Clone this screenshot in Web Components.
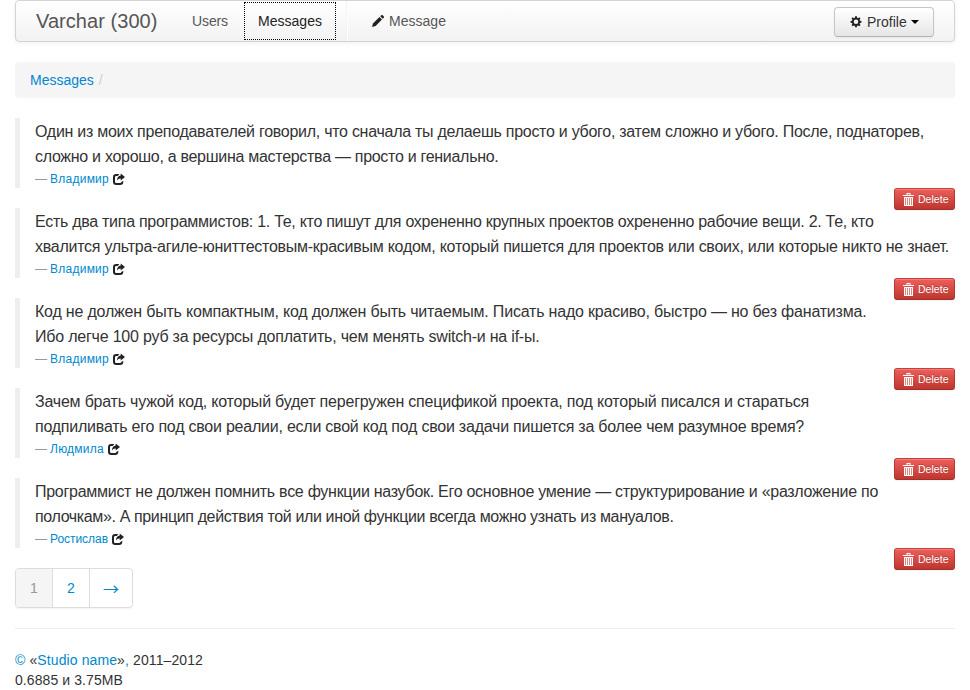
<!DOCTYPE html>
<html lang="ru">
<head>
<meta charset="utf-8">
<title>Varchar (300)</title>
<style>
body{margin:0;background:#fff;font:14px/20px "Liberation Sans",Arial,sans-serif;color:#333}
app-page{--link:#08c}
</style>
</head>
<body>
<app-page></app-page>
<script>
const define=(name,html,init)=>{
  const t=document.createElement('template');
  t.innerHTML=html;
  customElements.define(name,class extends HTMLElement{
    constructor(){super();this.attachShadow({mode:'open'}).append(t.content.cloneNode(true));}
    connectedCallback(){if(init)init(this,this.shadowRoot);}
  });
};
const icons={
  pencil:'<path d="M1 13l1-3.600 6.400-6.400 2.600 2.600L4.600 12z"/><path d="M9.200 2.200l1-1q.8-.5 1.500.1l1 1q.6.700.1 1.500l-1 1z"/>',
  cog:'<path fill-rule="evenodd" transform="translate(1.400 1.100) scale(.8)" d="M5.900.3h2.200l.3 1.800 1.200.5 1.500-1.100 1.500 1.500-1.100 1.500.5 1.200 1.800.3v2.200l-1.800.3-.5 1.200 1.100 1.500-1.500 1.500-1.500-1.100-1.200.5-.3 1.800H5.900l-.3-1.800-1.200-.5-1.500 1.100-1.500-1.500 1.100-1.500-.5-1.200-1.800-.3V6l1.800-.3.5-1.200L1.400 3l1.500-1.500 1.500 1.100 1.200-.5zM7 4.200a2.900 2.900 0 1 0 0 5.800a2.900 2.900 0 1 0 0-5.800z"/>',
  share:'<path d="M7.300 2H4.200Q1 2 1 5.200v4.600Q1 13 4.200 13h3.900q3.200 0 3.200-3.200V8.700L9.300 10.100Q9.300 11 8.100 11H4.300Q3 11 3 9.700V5.300Q3 4 4.300 4h1.500z"/><path d="M8.700 1.400L13 5 8.700 8.600V6.400Q6.200 6.200 5 8.500q.1-4.600 3.700-5z"/>',
  trash:'<path fill-rule="evenodd" d="M3.500 0h4v2H11v1H0V2h3.500zM4.500 1v1h2V1z"/><path d="M1 4h9v8.500H1z" opacity=".35"/><path d="M1 4h9v1H1zM1 4h1v8.500H1zM3 4h1v8.500H3zM5 4h1v8.500H5zM7 4h1v8.500H7zM9 4h1v8.500H9zM1 12h9v1H1z"/>'
};
define('ui-icon','<style>:host{display:inline-block;width:14px;height:14px;flex:none}svg{display:block;width:14px;height:14px;fill:currentColor}</style><svg viewBox="0 0 14 14"></svg>',(h,r)=>{r.querySelector('svg').innerHTML=icons[h.getAttribute('name')];});
// A single line of text whose tracking is set so that it spans the given measure.
define('text-line','<style>:host{display:block;width:max-content;white-space:nowrap}</style><slot></slot>',h=>{
  const w=+h.getAttribute('measure');
  if(w)h.style.letterSpacing=(w-h.getBoundingClientRect().width)/h.textContent.length+'px';
});
define('nav-link',`<style>:host{display:block;color:#555}
a{display:flex;align-items:center;box-sizing:border-box;height:38px;padding:0 13px;text-shadow:0 1px 0 #fff;outline-offset:-1px}
:host([active]){color:#222}:host([active]) a{outline:1px dotted #000;padding:0 14px}
::slotted(ui-icon){color:#222;margin-right:4px}</style><a><slot></slot></a>`);
define('profile-button',`<style>:host{display:flex;align-items:center;box-sizing:border-box;width:100px;height:30px;padding:0 14px 0 15px;border:1px solid #c6c6c6;border-bottom-color:#b3b3b3;border-radius:4px;background:linear-gradient(#fff,#e6e6e6);box-shadow:inset 0 1px 0 rgba(255,255,255,.2),0 1px 2px rgba(0,0,0,.05);text-shadow:0 1px 1px rgba(255,255,255,.75)}
ui-icon{color:#222;width:14px;margin-right:4px;margin-left:-1px}
svg{margin-left:4px}</style><ui-icon name="cog"></ui-icon><slot></slot><svg width="8" height="4" viewBox="0 0 8 4"><path d="M0 0h8L4 4z"/></svg>`);
define('nav-bar',`<style>:host{display:flex;box-sizing:border-box;height:42px;border:1px solid #d4d4d4;border-radius:4px;background:linear-gradient(#fff,#f2f2f2);box-shadow:0 1px 4px rgba(0,0,0,.065);padding:1px 20px}
.brand{font-size:20px;line-height:40px;color:#555;text-shadow:0 1px 0 #fff;width:143px;margin-top:-1px}
.sep{width:1px;height:40px;margin:-1px 10px 0 10px;background:#f2f2f2;border-right:1px solid #fff}
profile-button{margin:5px 0 0 auto}</style>
<div class="brand"><text-line measure="121.500">Varchar (300)</text-line></div><nav-link><text-line measure="36">Users</text-line></nav-link><nav-link active style="margin-left:3px"><text-line measure="64">Messages</text-line></nav-link><div class="sep"></div><nav-link><ui-icon name="pencil"></ui-icon><text-line measure="57">Message</text-line></nav-link><profile-button>Profile</profile-button>`);
define('bread-crumb',`<style>:host{display:flex;gap:5px;margin-top:20px;padding:8px 15px;border-radius:4px;background:#f5f5f5}a{color:var(--link)}i{font-style:normal;color:#ccc;text-shadow:0 1px 0 #fff}</style><a><slot></slot></a><i>/</i>`);
define('delete-button',`<style>:host{display:flex;align-items:center;box-sizing:border-box;width:61px;height:22px;padding-left:8px;border:1px solid #bd362f;border-color:#c5403b #b9352f #a52c27;border-radius:3px;background:linear-gradient(#ee5f5b,#bd362f);box-shadow:inset 0 1px 0 rgba(255,255,255,.2),0 1px 2px rgba(0,0,0,.05);color:#fff;font-size:10.500px;line-height:16px;text-shadow:0 -1px 0 rgba(0,0,0,.25)}
ui-icon{margin:2px 1px 0 0}</style><ui-icon name="trash"></ui-icon><text-line measure="30.500">Delete</text-line>`);
define('message-quote',`<style>:host{display:block;position:relative;margin-top:20px;padding-left:15px;border-left:5px solid #eee;box-sizing:border-box;height:70px}
p{margin:0;padding-top:1px;font-size:16px;line-height:25px}
.by{display:flex;font-size:12px;line-height:20px;color:#999}
.by ui-icon{color:#222;margin-top:3px}
delete-button{position:absolute;right:0;top:100%}</style>
<p><slot></slot></p><div class="by">—<slot name="author"></slot><ui-icon name="share"></ui-icon></div><delete-button></delete-button>`);
define('page-nav',`<style>:host{display:flex;box-sizing:border-box;width:118px;height:40px;margin-top:20px;border:1px solid #ddd;border-radius:4px;overflow:hidden;box-shadow:0 1px 2px rgba(0,0,0,.05);color:var(--link);line-height:38px;text-align:center}
span{width:36px;border-right:1px solid #ddd}.on{background:#f5f5f5;color:#999}span:last-child{flex:1;border:0;font-family:"Noto Sans CJK JP",sans-serif;font-size:16px}</style><span class="on">1</span><span>2</span><span>→</span>`);
define('page-footer',`<style>:host{display:block;margin-top:20px;border-top:1px solid #eee;padding-top:21px}a{color:var(--link)}</style>
<text-line measure="188"><a>©</a> «<a>Studio name</a>»<a>,</a> 2011–2012</text-line><text-line measure="108">0.6885 и 3.75MB</text-line>`);
const quotes=[
 ['Владимир',59,'Один из моих преподавателей говорил, что сначала ты делаешь просто и убого, затем сложно и убого. После, поднаторев,',889,'сложно и хорошо, а вершина мастерства — просто и гениально.',463.5],
 ['Владимир',59,'Есть два типа программистов: 1. Те, кто пишут для охрененно крупных проектов охрененно рабочие вещи. 2. Те, кто',838.5,'хвалится ультра-агиле-юниттестовым-красивым кодом, который пишется для проектов или своих, или которые никто не знает.',914],
 ['Владимир',59,'Код не должен быть компактным, код должен быть читаемым. Писать надо красиво, быстро — но без фанатизма.',831.5,'Ибо легче 100 руб за ресурсы доплатить, чем менять switch-и на if-ы.',504.5],
 ['Людмила',54,'Зачем брать чужой код, который будет перегружен спецификой проекта, под который писался и стараться',774,'подпиливать его под свои реалии, если свой код под свои задачи пишется за более чем разумное время?',769],
 ['Ростислав',58,'Программист не должен помнить все функции назубок. Его основное умение — структурирование и «разложение по',843,'полочкам». А принцип действия той или иной функции всегда можно узнать из мануалов.',638.5]
];
define('app-page',`<style>:host{display:block;width:940px;height:690px;margin-left:15px}
[slot=author]{color:var(--link);margin:0 3px}</style>
<nav-bar></nav-bar><bread-crumb>Messages</bread-crumb>
${quotes.map(q=>`<message-quote><text-line measure="${q[3]}">${q[2]}</text-line><text-line measure="${q[5]}">${q[4]}</text-line><text-line slot="author" measure="${q[1]}">${q[0]}</text-line></message-quote>`).join('')}
<page-nav></page-nav><page-footer></page-footer>`);
</script>
</body>
</html>
